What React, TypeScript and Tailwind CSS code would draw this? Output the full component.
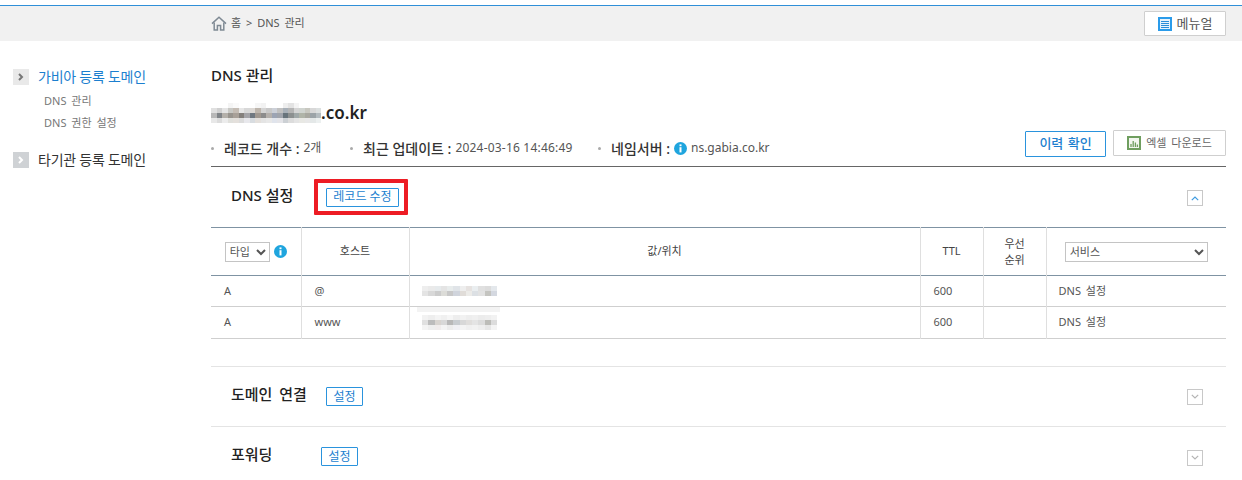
import React from "react";

const domainRows = [
  ["#fff", "#fff", "#fff", "#f4f4f4", "#fafafa", "#fff", "#fff", "#fff", "#f6f6f6", "#f2f2f2", "#fff", "#fff", "#fff", "#eee", "#e3e3e3", "#f4f4f4", "#fff", "#fff", "#fff", "#fff"],
  ["#e0e0e0", "#d0d0d0", "#e4e4e4", "#c8c8c4", "#c4bcb4", "#e6e6e6", "#d8d8d8", "#dcd8d4", "#bdb5ac", "#d4d4d4", "#c8c8c8", "#ccd0d8", "#c0c0c0", "#a8b0b8", "#b4b4b4", "#d4d4d4", "#d0d4d0", "#c8c8c0", "#d8d8d8", "#dce0e0"],
  ["#b8b8b8", "#808488", "#b4b0aa", "#98948e", "#a8a098", "#84807c", "#a4a4a8", "#707880", "#a09890", "#8c8c8c", "#b4b0ac", "#9ca4b4", "#a0a4ac", "#68747c", "#8c9090", "#a0a8a8", "#b0b4a8", "#a8a8a0", "#9ca4a8", "#b4bcc0"],
  ["#e8e8e8", "#dcdcdc", "#ececec", "#e0e0dc", "#e4e0dc", "#dcdcdc", "#e8e8ec", "#d8dce0", "#e4e0dc", "#e4e4e4", "#e8e8e8", "#e0e4ec", "#e4e4e8", "#ccd0d4", "#dcdcdc", "#e4e4e4", "#e8e8e4", "#e8e8e8", "#e4e8e8", "#ecf0f0"],
];

const valueRowsA = [
  ["#eee", "#eaeaea", "#e6eaec", "#e4e4e4", "#e8ecec", "#e0e4e8", "#eeeeee", "#e6e2e0", "#eaeef0", "#e0e0e0", "#dcdcdc", "#e4e8ec"],
  ["#e4e4e4", "#d8d8d8", "#cccccc", "#dcdcd8", "#c8c8c8", "#d0d4dc", "#e0dcd8", "#ecebe8", "#dce0e4", "#e2e2e2", "#c4c4c0", "#d4d8e0"],
];

const valueRowsB = [
  ["#f2f2f2", "#eeeeee", "#f4f4f4", "#f0f0f0", "#f6f6f6", "#eeeeee", "#f2f2f2", "#eeeeee", "#f0f0f0", "#ececec", "#eeeeee", "#f2f2f2"],
  ["#e0e0e0", "#bcbcbc", "#d8d4d0", "#d8d8d8", "#b8b8b8", "#c8ccd0", "#d8d8d8", "#e0dedc", "#e4e4e4", "#dcdcdc", "#bcbcb8", "#dcdcdc"],
  ["#f4f4f4", "#eeeeee", "#f0ecec", "#f4f4f4", "#ececec", "#f0f0f4", "#f4f4f4", "#f0f0f0", "#f2f2f2", "#eeeeee", "#e6e6e6", "#f4f4f4"],
];

// blurred out values from the screenshot
const Mosaic = ({ rows, w, h, className }: { rows: string[][]; w: number; h: number; className?: string }) => (
  <svg width={w * rows[0].length} height={h * rows.length} className={className} shapeRendering="crispEdges">
    {rows.map((row, y) =>
      row.map((c, x) => <rect key={`${x}-${y}`} x={x * w} y={y * h} width={w} height={h} fill={c} />)
    )}
  </svg>
);

const HomeIcon = () => (
  <svg width="16" height="15" viewBox="0 0 16 15" fill="none" stroke="#7f8a94" strokeWidth="1.5">
    <path d="M1 7.6 8 1.2l7 6.4" />
    <path d="M3.2 6.4v7.6h3.2V9.6h3.2V14h3.2V6.4" />
  </svg>
);

const InfoIcon = ({ size = 13 }: { size?: number }) => (
  <svg width={size} height={size} viewBox="0 0 13 13" className="shrink-0">
    <circle cx="6.5" cy="6.5" r="6.5" fill="#1fa5de" />
    <rect x="5.5" y="2.4" width="2" height="1.8" fill="#fff" />
    <rect x="5.5" y="5.2" width="2" height="5.2" fill="#fff" />
  </svg>
);

const ManualIcon = () => (
  <svg width="14" height="14" viewBox="0 0 14 14">
    <rect width="14" height="14" fill="#2a9bea" />
    <rect x="2" y="2" width="10" height="10" fill="#e8f3fc" />
    <path d="M3 4.5h8M3 6.5h8M3 8.5h8M3 10.5h8" stroke="#2a8ed8" strokeWidth="1.2" />
  </svg>
);

const ExcelIcon = () => (
  <svg width="14" height="14" viewBox="0 0 14 14">
    <rect width="14" height="14" fill="#6f9e5f" />
    <rect x="2" y="2" width="10" height="10" fill="#f2f6ef" />
    <path d="M4 11V8M6.2 11V5M8.4 11V6.5M10.4 11V8.5" stroke="#6f9e5f" strokeWidth="1.3" />
  </svg>
);

const Toggle = ({ up }: { up?: boolean }) => (
  <button className="flex h-4 w-4 items-center justify-center border border-[#c8c8c8] bg-white">
    <svg width="8" height="5" viewBox="0 0 8 5" fill="none" stroke={up ? "#3e9be0" : "#b4b4b4"} strokeWidth="1.2">
      <path d={up ? "M.8 4.2 4 1l3.2 3.2" : "M.8.8 4 4 7.2.8"} />
    </svg>
  </button>
);

const SideHead = ({ label, active }: { label: string; active?: boolean }) => (
  <div className="flex h-4 items-center">
    <span className={`flex h-4 w-4 items-center justify-center ${active ? "bg-[#e9e9e9]" : "bg-[#cfd2d5]"}`}>
      <svg width="6" height="8" viewBox="0 0 6 8" fill="none" stroke={active ? "#777" : "#fff"} strokeWidth="2">
        <path d="M1 1l3 3-3 3" />
      </svg>
    </span>
    <span className={`ml-[9px] mb-px text-[14px] tracking-[-0.25px] ${active ? "text-[#1c7fcf]" : "text-[#333]"}`}>{label}</span>
  </div>
);

const BlueButton = ({ label, className }: { label: string; className: string }) => (
  <button className={`flex h-[19px] items-center justify-center rounded-[1px] border border-[#2a93dd] bg-white text-[12px] text-[#1c7fcf] ${className}`}>
    {label}
  </button>
);

const Meta = ({ label, value, className }: { label: string; value: React.ReactNode; className: string }) => (
  <div className={`flex h-[18px] items-center self-end ${className}`}>
    <span className="mr-[10px] h-[3px] w-[3px] rounded-full bg-[#aaa]" />
    <span className="text-[14px] font-medium text-[#333]">{label} :</span>
    <span className="ml-1 flex items-center gap-1 text-[12px] text-[#555]">{value}</span>
  </div>
);

const Th = ({ children, className = "" }: { children?: React.ReactNode; className?: string }) => (
  <th className={`border-r border-[#dfdfdf] p-0 text-center text-[11px] font-normal text-[#444] last:border-r-0 ${className}`}>{children}</th>
);

const Td = ({ children, className = "" }: { children?: React.ReactNode; className?: string }) => (
  <td className={`border-r border-[#dfdfdf] p-0 text-[11px] text-[#555] last:border-r-0 ${className}`}>{children}</td>
);

const records = [
  { type: "A", host: "@", rows: valueRowsA, ttl: 600 },
  { type: "A", host: "www", rows: valueRowsB, ttl: 600 },
];

export default function App() {
  return (
    <div className="h-[480px] w-[1242px] overflow-hidden bg-white pt-[5px] font-['Noto_Sans','Noto_Sans_CJK_KR',sans-serif]">
      <header className="flex h-[36px] items-center border-t border-[#2f8fd8] bg-[#f1f1f1] pl-[211px] pr-4">
        <HomeIcon />
        <span className="ml-[4px] text-[11px] text-[#555] [word-spacing:2px]">홈 &gt; DNS 관리</span>
        <button className="ml-auto flex h-[25px] w-[82px] items-center justify-center gap-[5px] rounded-[1px] border border-[#cfcfcf] bg-white text-[13px] text-[#555]">
          <ManualIcon />
          메뉴얼
        </button>
      </header>

      <div className="flex">
        <aside className="w-[211px] shrink-0 pl-[13px] pt-[28px]">
          <SideHead label="가비아 등록 도메인" active />
          <ul className="mt-[5px] pl-[31px] text-[11px] text-[#777] [word-spacing:2px]">
            <li className="h-[22px] leading-[21px]">DNS 관리</li>
            <li className="h-[21px] leading-[21px]">DNS 권한 설정</li>
          </ul>
          <div className="mt-[19px]">
            <SideHead label="타기관 등록 도메인" />
          </div>
        </aside>

        <main className="w-[1015px] shrink-0 pt-[25px]">
          <h1 className="text-[15px] font-medium leading-[18px] text-[#222]">DNS 관리</h1>
          <div className="mt-[17px] flex h-[24px] items-center">
            <Mosaic rows={domainRows} w={5.5} h={5} />
            <span className="text-[17px] font-semibold text-[#222]">.co.kr</span>
          </div>

          <div className="mt-[5px] flex items-end border-b border-[#666] pb-[9px]">
            <Meta className="w-[139px]" label="레코드 개수" value="2개" />
            <Meta
              className="w-[248px]"
              label="최근 업데이트"
              value={<span className="tracking-[0.2px]">2024-03-16 14:46:49</span>}
            />
            <Meta
              className=""
              label="네임서버"
              value={
                <>
                  <InfoIcon />
                  ns.gabia.co.kr
                </>
              }
            />
            <button className="ml-auto flex h-[26px] w-[81px] items-center justify-center rounded-[1px] border border-[#2a93dd] bg-white text-[13px] font-medium text-[#1c7fcf] [word-spacing:1px]">
              이력 확인
            </button>
            <button className="mb-px ml-[7px] flex h-[26px] w-[113px] items-center justify-center gap-[5px] rounded-[1px] border border-[#cfcfcf] bg-white text-[11px] text-[#666] [word-spacing:2px]">
              <ExcelIcon />
              엑셀 다운로드
            </button>
          </div>

          <section className="flex h-[60px] items-center pl-5 pr-[23px]">
            <h2 className="mb-[4px] w-[95px] text-[15px] font-medium text-[#222]">DNS 설정</h2>
            <div className="relative">
              <BlueButton label="레코드 수정" className="w-[73px]" />
              <div className="absolute -left-[12px] -top-[9px] h-[36px] w-[94px] rounded-[1px] border-[4px] border-[#ed1c24]" />
            </div>
            <div className="ml-auto mt-[2px]">
              <Toggle up />
            </div>
          </section>

          <table className="w-full table-fixed border-collapse border-t border-b border-t-[#7f93a3] border-b-[#cfcfcf]">
            <colgroup>
              <col className="w-[90px]" />
              <col className="w-[108px]" />
              <col className="w-[511px]" />
              <col className="w-[63px]" />
              <col className="w-[63px]" />
              <col />
            </colgroup>
            <thead>
              <tr className="h-[48px] border-b border-[#7f93a3]">
                <Th>
                  <div className="flex items-center justify-center gap-1">
                    <select className="h-[20px] w-[45px] border border-[#c4c4c4] bg-white text-[11px] text-[#555]">
                      <option>타입</option>
                    </select>
                    <InfoIcon />
                  </div>
                </Th>
                <Th>호스트</Th>
                <Th>값/위치</Th>
                <Th className="font-medium">TTL</Th>
                <Th className="leading-[16px]">
                  우선
                  <br />
                  순위
                </Th>
                <Th>
                  <select className="h-[20px] w-[143px] border border-[#c4c4c4] bg-white text-[11px] text-[#555]">
                    <option>서비스</option>
                  </select>
                </Th>
              </tr>
            </thead>
            <tbody>
              {records.map((r, i) => (
                <tr key={r.host} className={i === 0 ? "h-[31px] border-b border-[#cfcfcf]" : "h-[32px]"}>
                  <Td className="pl-[13px]">{r.type}</Td>
                  <Td className="pl-[13px]">{r.host}</Td>
                  <Td className="relative pl-[12px]">
                    {i === 1 && <div className="absolute left-[7px] top-0 h-[5px] w-[83px] bg-[#f3f3f3]" />}
                    <Mosaic rows={r.rows} w={6.25} h={5} className="block" />
                  </Td>
                  <Td className="pl-[13px]">{r.ttl}</Td>
                  <Td />
                  <Td className="pl-[12px] [word-spacing:2px]">DNS 설정</Td>
                </tr>
              ))}
            </tbody>
          </table>

          <section className="mt-[27px] flex h-[60px] items-center border-t border-[#e4e4e4] pl-5 pr-[23px]">
            <h2 className="mb-[4px] w-[95px] text-[15px] font-medium text-[#222] [word-spacing:3px]">도메인 연결</h2>
            <BlueButton label="설정" className="w-[37px]" />
            <div className="ml-auto">
              <Toggle />
            </div>
          </section>
          <section className="flex h-[60px] items-center border-t border-[#e4e4e4] pl-5 pr-[23px]">
            <h2 className="mb-[4px] w-[90px] text-[15px] font-medium text-[#222]">포워딩</h2>
            <BlueButton label="설정" className="w-[37px]" />
            <div className="ml-auto mt-[2px]">
              <Toggle />
            </div>
          </section>
        </main>
      </div>
    </div>
  );
}
